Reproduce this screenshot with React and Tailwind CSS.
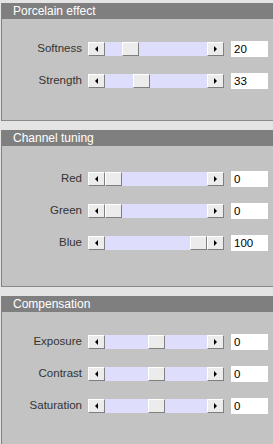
import React from 'react';

const font = { fontFamily: '"Liberation Sans", Arial, sans-serif' };

const ArrowLeft = () => (
    <span className="w-0 h-0 border-y-[3px] border-y-transparent border-r-[3px] border-r-black" />
);

const ArrowRight = () => (
    <span className="w-0 h-0 border-y-[3px] border-y-transparent border-l-[3px] border-l-black" />
);

const Button = ({ children }) => (
    <div className="w-[17px] h-[14px] shrink-0 flex items-center justify-center bg-[#ececec] border-t border-l border-t-white border-l-white border-b border-r border-b-[#808080] border-r-[#808080]">
        {children}
    </div>
);

const Slider = ({ value, min, max }) => {
    const frac = (value - min) / (max - min);
    return (
        <div className="flex w-[136px] h-[14px]">
            <Button><ArrowLeft /></Button>
            <div className="relative flex-1 bg-[#dedefc]">
                <div
                    className="absolute top-0 w-[17px] h-[14px] bg-[#ececec] border-t border-l border-t-white border-l-white border-b border-r border-b-[#808080] border-r-[#808080]"
                    style={{ left: Math.round(frac * 85) }}
                />
            </div>
            <Button><ArrowRight /></Button>
        </div>
    );
};

const Row = ({ label, value, min = 0, max = 100 }) => (
    <div className="flex items-center h-4">
        <div className="w-[80px] text-right text-[11.5px] text-[#333333] leading-none">{label}</div>
        <div className="ml-[6px]">
            <Slider value={value} min={min} max={max} />
        </div>
        <div className="ml-[7px] w-[37px] h-4 bg-white text-[11.5px] text-black leading-4 pl-[3px]">{value}</div>
    </div>
);

const Panel = ({ title, height, pt, children }) => (
    <div className="border-l border-[#808080]">
        <div className="h-4 bg-[#7f7f7f] text-white text-[12px] leading-4 pl-[11px]">{title}</div>
        <div className="bg-[#c3c3c3] border-b border-[#8a8a8a] flex flex-col gap-4" style={{ height, paddingTop: pt }}>
            {children}
        </div>
    </div>
);

export default function App() {
    return (
        <div className="w-[273px] h-[444px] overflow-hidden bg-[#e4e4e4] pt-[3px] pl-px flex flex-col gap-[9px]" style={font}>
            <Panel title="Porcelain effect" height={102} pt={22}>
                <Row label="Softness" value={20} />
                <Row label="Strength" value={33} />
            </Panel>
            <Panel title="Channel tuning" height={141} pt={25}>
                <Row label="Red" value={0} />
                <Row label="Green" value={0} />
                <Row label="Blue" value={100} />
            </Panel>
            <Panel title="Compensation" height={200} pt={22}>
                <Row label="Exposure" value={0} min={-100} max={100} />
                <Row label="Contrast" value={0} min={-100} max={100} />
                <Row label="Saturation" value={0} min={-100} max={100} />
            </Panel>
        </div>
    );
}
